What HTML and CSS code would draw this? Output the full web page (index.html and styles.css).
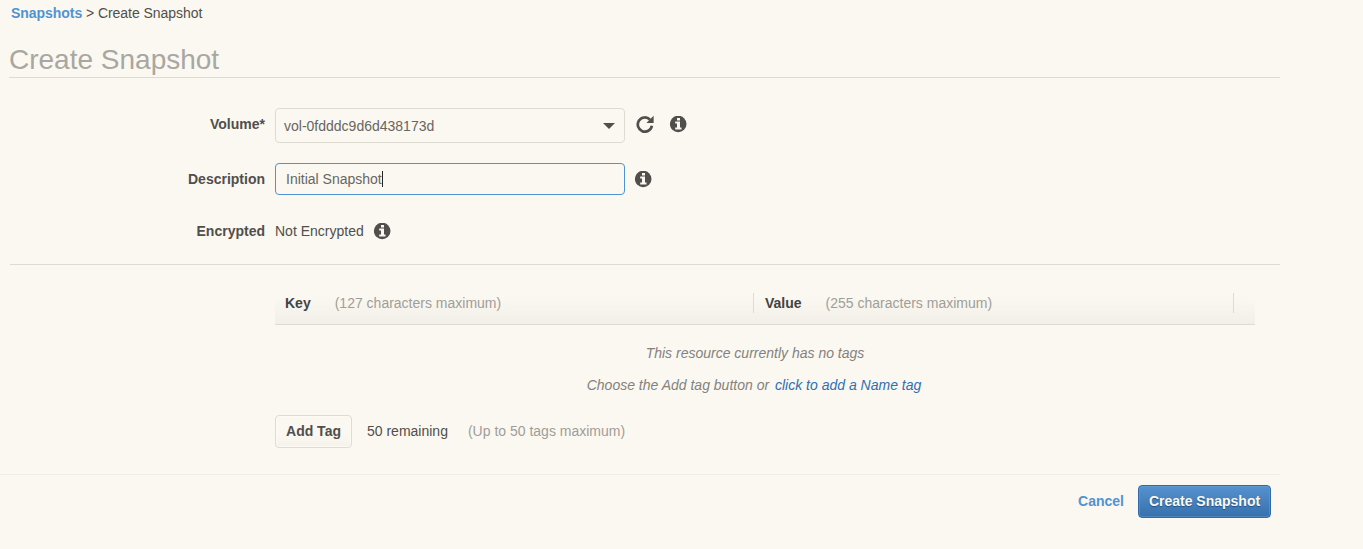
FILE: index.html
```html
<!DOCTYPE html>
<html lang="en">
<head>
<meta charset="utf-8">
<title>Create Snapshot</title>
<link rel="stylesheet" href="styles.css">
</head>
<body>
<svg class="defs" width="0" height="0" aria-hidden="true">
  <symbol id="info" viewBox="0 0 17 17">
    <circle cx="8.2" cy="8" r="8.3" fill="#504f4b"/>
    <path fill="#fbf8f1" d="M7 2h3v2.4H7zM5.2 5.6H10v6h1.5v2H5.2v-2H7v-4H5.2z"/>
  </symbol>
</svg>
<main class="page">
  <nav class="crumbs"><a class="link" href="#">Snapshots</a> &gt; <span>Create Snapshot</span></nav>
  <h1 class="title">Create Snapshot</h1>
  <form class="form">
    <div class="row row-volume">
      <label class="label">Volume*</label>
      <div class="select"><span>vol-0fdddc9d6d438173d</span><i class="caret"></i></div>
      <svg class="refresh" viewBox="0 0 18 18"><path fill="none" stroke="#504f4b" stroke-width="2.7" d="M14 4.6A7.1 7.1 0 1 0 15.9 10.8"/><path fill="#504f4b" d="M17.6.8v7.2h-7.2z"/></svg>
      <svg class="info info-volume"><use href="#info"/></svg>
    </div>
    <div class="row row-description">
      <label class="label">Description</label>
      <div class="input"><span>Initial Snapshot</span><i class="cursor"></i></div>
      <svg class="info"><use href="#info"/></svg>
    </div>
    <div class="row row-encrypted">
      <label class="label">Encrypted</label>
      <span>Not Encrypted</span>
      <svg class="info"><use href="#info"/></svg>
    </div>
  </form>
  <section class="tags">
    <div class="tags-head">
      <div class="col col-key"><b>Key</b><span class="hint">(127 characters maximum)</span></div>
      <div class="col col-value"><b>Value</b><span class="hint">(255 characters maximum)</span></div>
    </div>
    <div class="empty">
      <p>This resource currently has no tags</p>
      <p>Choose the Add tag button or <a class="name-link" href="#">click to add a Name tag</a></p>
    </div>
    <div class="tag-actions">
      <button class="btn" type="button">Add Tag</button>
      <span class="remaining">50 remaining</span>
      <span class="hint">(Up to 50 tags maximum)</span>
    </div>
  </section>
  <footer class="footer">
    <a class="link" href="#">Cancel</a>
    <button class="btn btn-primary" type="button">Create Snapshot</button>
  </footer>
</main>
</body>
</html>
```
FILE: styles.css
```css
* { box-sizing: border-box; }
body {
  margin: 0;
  background: #fbf8f1;
  color: #504f4b;
  font: 14px/16px "Liberation Sans", Arial, sans-serif;
}
a { text-decoration: none; }
.defs { display: block; height: 0; }
.page { width: 1280px; }
.crumbs { padding: 5px 0 0 11px; height: 41px; letter-spacing: -.05px; }
.link { color: #5093d3; font-weight: bold; }
.title {
  margin: 0 0 0 9px;
  height: 37px;
  border-bottom: 1px solid #dedbd3;
  color: #a9a7a1;
  font-size: 28px;
  font-weight: normal;
  line-height: 38px;
}
.form {
  margin-left: 10px;
  height: 187px;
  padding-top: 30px;
  border-bottom: 1px solid #dedbd3;
}
.row { display: flex; align-items: center; }
.label { width: 255px; margin-right: 10px; text-align: right; font-weight: bold; }
.row-volume { height: 35px; margin-bottom: 20px; }
.row-volume .label { padding-bottom: 3px; }
.row-description { height: 32px; margin-bottom: 28px; }
.row-encrypted { height: 16px; }
.select, .input {
  display: flex;
  align-items: center;
  width: 350px;
  border: 1px solid #dedbd3;
  border-radius: 4px;
  color: #676661;
}
.select { height: 35px; padding: 1px 9px 0 8px; justify-content: space-between; }
.input { height: 32px; padding-left: 10px; border-color: #5093d3; }
.caret { border: 6px solid transparent; border-top-color: #504f4b; border-bottom: 0; }
.cursor { width: 1px; height: 16px; background: #222; }
.info { width: 17px; height: 17px; margin-left: 10px; }
.info-volume { margin: 0 0 2px 16px; }
.refresh { width: 18px; height: 18px; margin: 0 0 3px 11px; }
.tags { margin-left: 275px; width: 980px; padding-top: 20px; height: 209px; }
.tags-head {
  display: flex;
  align-items: center;
  height: 40px;
  padding-bottom: 3px;
  border-bottom: 1px solid #dedbd3;
  background: linear-gradient(#fbf8f1 30%, #f2efe9);
}
.col { display: flex; height: 20px; align-items: center; border-right: 1px solid #dedbd3; }
.col b { color: #444340; }
.col-key { width: 479px; padding-left: 10px; gap: 24px; }
.col-value { width: 480px; padding-left: 11px; gap: 24px; }
.hint { color: #a09e98; }
.empty { width: 960px; padding-top: 20px; text-align: center; font-style: italic; color: #84827d; }
.empty p { margin: 0 0 16px; }
.empty p + p { padding-right: 2px; }
.name-link { color: #2e70b1; margin-left: 2px; }
.tag-actions { display: flex; align-items: center; margin-top: 22px; }
.btn {
  height: 33px;
  width: 77px;
  padding: 0 0 2px;
  border: 1px solid #dedbd3;
  border-radius: 4px;
  background: linear-gradient(#fbf8f1 60%, #f5f2eb);
  box-shadow: inset 0 0 0 1px #fdfaf4;
  color: #504f4b;
  font: bold 14px/16px "Liberation Sans", Arial, sans-serif;
}
.tag-actions span { padding-bottom: 1px; }
.remaining { margin: 0 20px 0 15px; }
.footer {
  display: flex;
  align-items: center;
  justify-content: flex-end;
  gap: 14px;
  padding: 10px 9px 0 0;
  border-top: 1px solid #f0ece5;
}
.footer .link { padding-bottom: 1px; }
.btn-primary {
  width: 133px;
  border-color: #2e6bab;
  background: linear-gradient(#5692cd, #3770ad);
  box-shadow: inset 0 0 0 1px rgba(110, 165, 218, .4);
  color: #fcf8f0;
  text-shadow: 0 1px 1px #244f7d;
}
```
